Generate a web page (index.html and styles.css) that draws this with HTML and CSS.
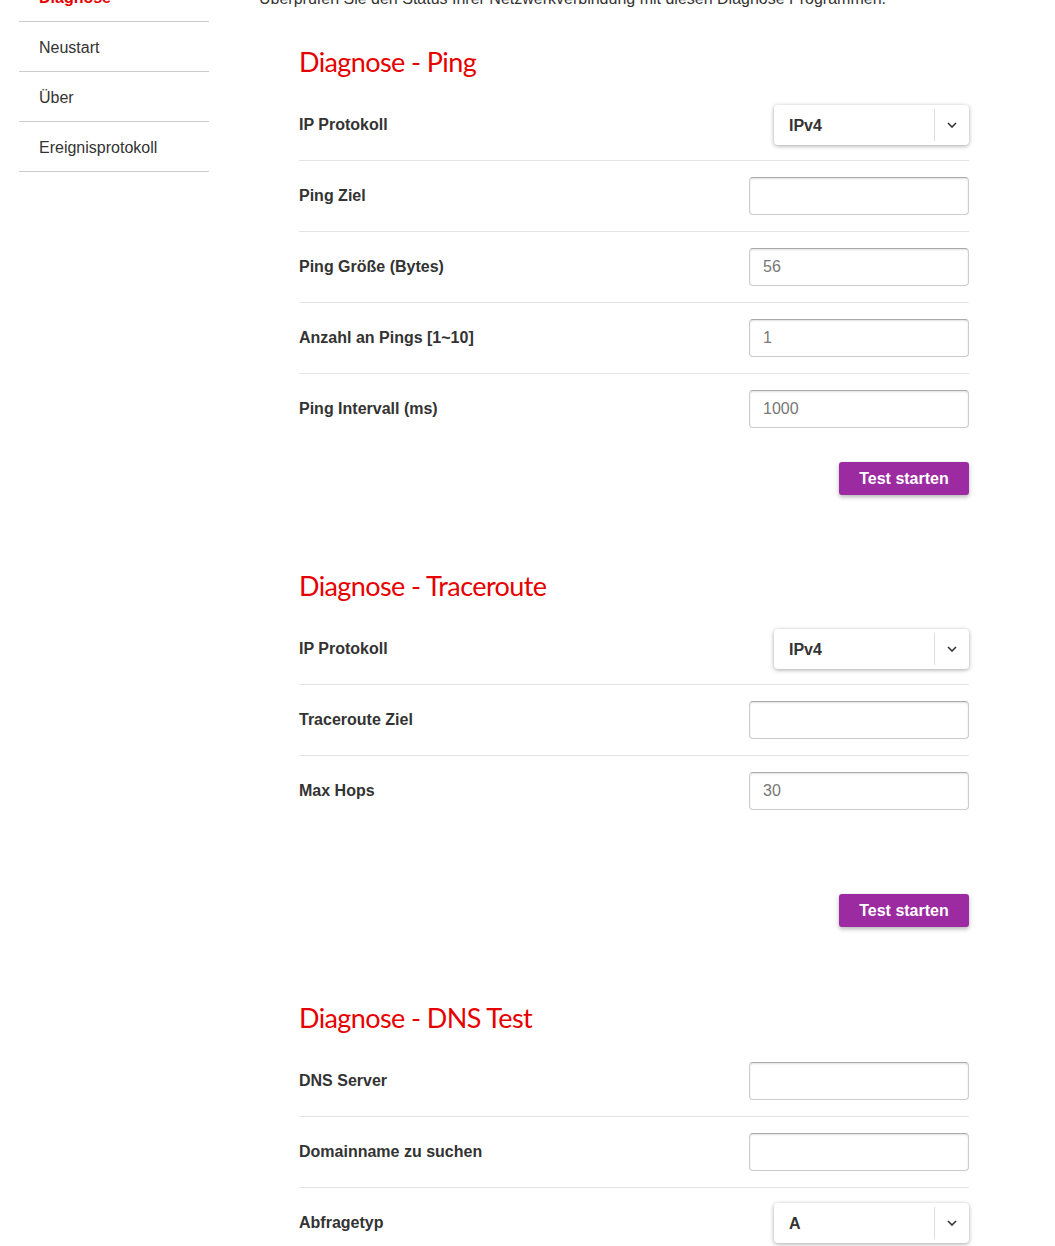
FILE: index.html
```html
<!DOCTYPE html>
<html lang="de">
<head>
  <meta charset="UTF-8">
  <title>Diagnose</title>
  <link rel="stylesheet" href="styles.css">
</head>
<body>
  <div class="page">
    <nav class="sidebar">
      <a class="nav-item active" href="#">Diagnose</a>
      <a class="nav-item" href="#">Neustart</a>
      <a class="nav-item" href="#">Über</a>
      <a class="nav-item" href="#">Ereignisprotokoll</a>
    </nav>

    <main class="content">
      <p class="intro">Überprüfen Sie den Status Ihrer Netzwerkverbindung mit diesen Diagnose Programmen.</p>

      <!-- Ping -->
      <section class="diag">
        <h2>Diagnose - Ping</h2>
        <div class="row">
          <label>IP Protokoll</label>
          <div class="select">
            <select name="pingProto">
              <option>IPv4</option>
              <option>IPv6</option>
            </select>
            <span class="select-arrow"><svg width="10" height="6" viewBox="0 0 10 6"><path d="M1 1l4 4 4-4" fill="none" stroke="#333" stroke-width="1.6"/></svg></span>
          </div>
        </div>
        <div class="row">
          <label>Ping Ziel</label>
          <input type="text" name="pingTarget">
        </div>
        <div class="row">
          <label>Ping Größe (Bytes)</label>
          <input type="text" name="pingSize" value="56">
        </div>
        <div class="row">
          <label>Anzahl an Pings [1~10]</label>
          <input type="text" name="pingCount" value="1">
        </div>
        <div class="row last">
          <label>Ping Intervall (ms)</label>
          <input type="text" name="pingInterval" value="1000">
        </div>
        <div class="actions">
          <button type="button">Test starten</button>
        </div>
      </section>

      <!-- Traceroute -->
      <section class="diag">
        <h2>Diagnose - Traceroute</h2>
        <div class="row">
          <label>IP Protokoll</label>
          <div class="select">
            <select name="traceProto">
              <option>IPv4</option>
              <option>IPv6</option>
            </select>
            <span class="select-arrow"><svg width="10" height="6" viewBox="0 0 10 6"><path d="M1 1l4 4 4-4" fill="none" stroke="#333" stroke-width="1.6"/></svg></span>
          </div>
        </div>
        <div class="row">
          <label>Traceroute Ziel</label>
          <input type="text" name="traceTarget">
        </div>
        <div class="row last">
          <label>Max Hops</label>
          <input type="text" name="maxHops" value="30">
        </div>
        <div class="actions spaced">
          <button type="button">Test starten</button>
        </div>
      </section>

      <!-- DNS -->
      <section class="diag">
        <h2>Diagnose - DNS Test</h2>
        <div class="row">
          <label>DNS Server</label>
          <input type="text" name="dnsServer">
        </div>
        <div class="row">
          <label>Domainname zu suchen</label>
          <input type="text" name="dnsName">
        </div>
        <div class="row last">
          <label>Abfragetyp</label>
          <div class="select">
            <select name="dnsType">
              <option>A</option>
              <option>AAAA</option>
              <option>MX</option>
            </select>
            <span class="select-arrow"><svg width="10" height="6" viewBox="0 0 10 6"><path d="M1 1l4 4 4-4" fill="none" stroke="#333" stroke-width="1.6"/></svg></span>
          </div>
        </div>
      </section>
    </main>
  </div>
</body>
</html>
```

FILE: styles.css
```css
body {
  margin: 0;
  font-family: "Liberation Sans", Arial, sans-serif;
  color: #333;
  background-color: #fff;
}
.page {
  display: flex;
  align-items: flex-start;
  margin-top: -28px;
}

/* left menu */
.sidebar {
  width: 190px;
  margin-left: 19px;
  flex-shrink: 0;
}
.nav-item {
  display: block;
  height: 49px;
  line-height: 51px;
  padding: 0 20px;
  border-bottom: 1px solid #ccc;
  font-size: 16px;
  color: #333;
  text-decoration: none;
  overflow: hidden;
}
.nav-item.active {
  color: #e60000;
  font-weight: bold;
}

/* main area */
.content {
  width: 710px;
  margin-left: 50px;
}
.intro {
  margin: 17px 0 0;
  font-size: 16px;
  line-height: 20px;
}
.diag {
  padding-left: 40px;
  margin-top: 65px;
}
.diag:first-of-type {
  margin-top: 27px;
}
.diag h2 {
  margin: 0 0 2px;
  font-family: Lato, "Open Sans", sans-serif;
  font-weight: normal;
  font-size: 27px;
  letter-spacing: -0.6px;
  line-height: 52px;
  color: #e60000;
}
.row {
  display: flex;
  justify-content: space-between;
  align-items: center;
  height: 70px;
  border-bottom: 1px solid #e4e4e4;
}
.row.last {
  border-bottom: none;
}
.row label {
  font-size: 16px;
  font-weight: bold;
  color: #333;
}
.row input {
  box-sizing: border-box;
  width: 220px;
  height: 38px;
  padding: 0 13px;
  border: 1px solid #ccc;
  border-top-color: #aaa;
  border-radius: 4px;
  box-shadow: inset 0 1px 2px rgba(0,0,0,0.12);
  font-family: inherit;
  font-size: 16px;
  color: #777;
}

/* dropdown */
.select {
  position: relative;
  width: 195px;
  height: 40px;
  border-radius: 4px;
  box-shadow: 0 1px 4px rgba(0,0,0,0.35);
  background: #fff;
}
.select select {
  appearance: none;
  -webkit-appearance: none;
  width: 100%;
  height: 100%;
  padding: 0 0 0 15px;
  border: none;
  background: transparent;
  font-family: inherit;
  font-size: 16px;
  font-weight: bold;
  color: #333;
  outline: none;
}
.select-arrow {
  position: absolute;
  top: 4px;
  right: 0;
  bottom: 4px;
  width: 34px;
  border-left: 1px solid #ddd;
  display: flex;
  align-items: center;
  justify-content: center;
  pointer-events: none;
}

/* buttons */
.actions {
  display: flex;
  justify-content: flex-end;
  margin-top: 18px;
}
.actions.spaced {
  margin-top: 68px;
}
button {
  width: 130px;
  height: 33px;
  border: none;
  border-radius: 3px;
  background-color: #9c2aa0;
  color: #fff;
  font-family: inherit;
  font-size: 16px;
  font-weight: bold;
  box-shadow: 0 2px 4px rgba(0,0,0,0.3);
  cursor: pointer;
}
```
